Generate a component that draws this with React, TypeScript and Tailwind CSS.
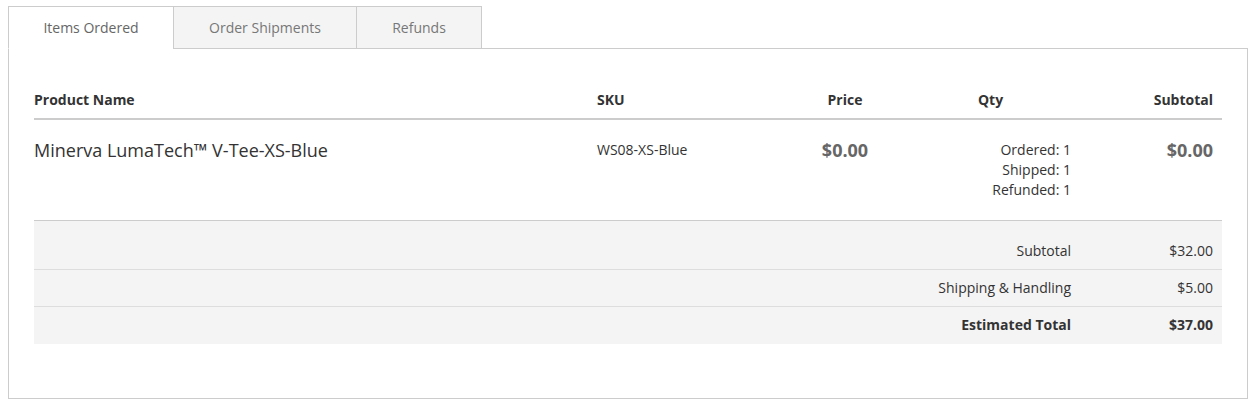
import React from "react";

const font = { fontFamily: '"Open Sans", "Liberation Sans", sans-serif' };

export default function App() {
  return (
    <div className="w-[1256px] h-[402px] bg-white px-[8px] pt-[6px] text-[#333]" style={font}>
      <div className="flex relative z-10 -mb-px">
        <div className="w-[166px] h-[43px] border border-[#ccc] border-b-white bg-white flex items-center justify-center text-[14px] text-[#666]">
          Items Ordered
        </div>
        <div className="w-[184px] h-[43px] -ml-px border border-[#ccc] bg-[#f4f4f4] flex items-center justify-center text-[14px] text-[#777]">
          Order Shipments
        </div>
        <div className="w-[126px] h-[43px] -ml-px border border-[#ccc] bg-[#f4f4f4] flex items-center justify-center text-[14px] text-[#777]">
          Refunds
        </div>
      </div>
      <div className="border border-[#ccc] px-[25px] pt-[41px] pb-[54px]">
        <div className="grid grid-cols-[563px_193px_110px_181px_141px] text-[14px] leading-[20px] font-bold pb-[8px] border-b-2 border-[#ccc]">
          <div>Product Name</div>
          <div>SKU</div>
          <div className="text-center">Price</div>
          <div className="text-center">Qty</div>
          <div className="text-right pr-[9px]">Subtotal</div>
        </div>
        <div className="grid grid-cols-[563px_193px_110px_181px_141px] pt-[20px] pb-[20px] border-b border-[#ccc] items-start">
          <div className="text-[18px] leading-[20px]">Minerva LumaTech™ V-Tee-XS-Blue</div>
          <div className="text-[14px] leading-[20px]">WS08-XS-Blue</div>
          <div className="text-center text-[18px] leading-[20px] font-bold text-[#666]">$0.00</div>
          <div className="text-right pr-[10px] text-[14px] leading-[20px]">
            <div>Ordered: 1</div>
            <div>Shipped: 1</div>
            <div>Refunded: 1</div>
          </div>
          <div className="text-right pr-[9px] text-[18px] leading-[20px] font-bold text-[#666]">$0.00</div>
        </div>
        <div className="bg-[#f4f4f4] text-[14px] leading-[20px]">
          <div className="flex pt-[20px] pb-[8px]">
            <div className="flex-1 text-right pr-[10px]">Subtotal</div>
            <div className="w-[141px] text-right pr-[9px]">$32.00</div>
          </div>
          <div className="flex py-[8px] border-t border-[#ddd]">
            <div className="flex-1 text-right pr-[10px]">Shipping &amp; Handling</div>
            <div className="w-[141px] text-right pr-[9px]">$5.00</div>
          </div>
          <div className="flex pt-[8px] pb-[9px] border-t border-[#ddd] font-bold">
            <div className="flex-1 text-right pr-[10px]">Estimated Total</div>
            <div className="w-[141px] text-right pr-[9px]">$37.00</div>
          </div>
        </div>
      </div>
    </div>
  );
}
